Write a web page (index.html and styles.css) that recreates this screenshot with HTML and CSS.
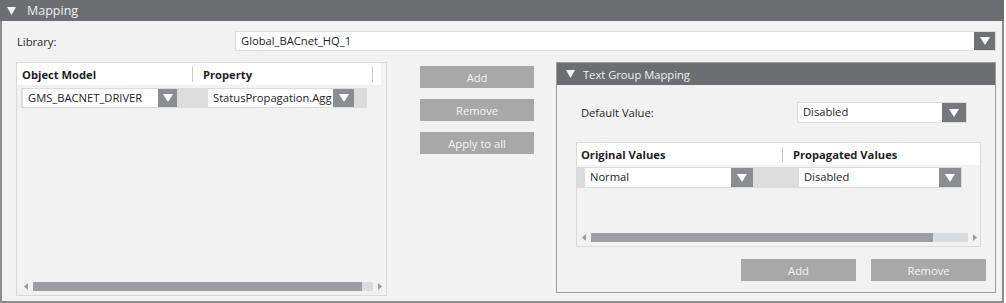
FILE: index.html
```html
<!DOCTYPE html>
<html lang="en">
<head>
    <meta charset="UTF-8">
    <title>Mapping</title>
    <link rel="stylesheet" href="styles.css">
</head>
<body>
    <div class="section">
        <div class="section-head">
            <svg class="caret" width="9" height="8" viewBox="0 0 9 8"><path d="M0 0H9L4.5 8Z" fill="#f2f2f2"/></svg>
            Mapping
        </div>
        <div class="section-body">
            <div class="lib-row">
                <label class="lib-label">Library:</label>
                <div class="combo combo-lib">
                    <span class="combo-text">Global_BACnet_HQ_1</span>
                    <span class="combo-btn"><svg width="10" height="8" viewBox="0 0 10 8"><path d="M0 0H10L5 8Z" fill="#fff"/></svg></span>
                </div>
            </div>

            <div class="main-row">
                <!-- object model / property grid -->
                <div class="grid grid-left">
                    <div class="grid-head">
                        <div class="col col-om">Object Model</div>
                        <div class="col col-prop">Property</div>
                    </div>
                    <div class="grid-row row-left">
                        <div class="combo combo-om">
                            <span class="combo-text">GMS_BACNET_DRIVER</span>
                            <span class="combo-btn light"><svg width="10" height="8" viewBox="0 0 10 8"><path d="M0 0H10L5 8Z" fill="#fff"/></svg></span>
                        </div>
                        <div class="combo combo-prop">
                            <span class="combo-text">StatusPropagation.Agg</span>
                            <span class="combo-btn light"><svg width="10" height="8" viewBox="0 0 10 8"><path d="M0 0H10L5 8Z" fill="#fff"/></svg></span>
                        </div>
                    </div>
                    <div class="grid-fill"></div>
                    <div class="hscroll hscroll-left">
                        <svg class="arrow" width="4" height="7" viewBox="0 0 4 7"><path d="M4 0V7L0 3.5Z" fill="#9a9c9f"/></svg>
                        <div class="track"><div class="thumb" style="width:329px"></div></div>
                        <svg class="arrow" width="4" height="7" viewBox="0 0 4 7"><path d="M0 0V7L4 3.5Z" fill="#9a9c9f"/></svg>
                    </div>
                </div>

                <div class="actions">
                    <button class="btn">Add</button>
                    <button class="btn">Remove</button>
                    <button class="btn">Apply to all</button>
                </div>

                <!-- text group mapping -->
                <div class="subpanel">
                    <div class="sub-head">
                        <svg class="caret" width="9" height="8" viewBox="0 0 9 8"><path d="M0 0H9L4.5 8Z" fill="#f2f2f2"/></svg>
                        Text Group Mapping
                    </div>
                    <div class="sub-body">
                        <div class="default-row">
                            <span class="default-label">Default Value:</span>
                            <div class="combo combo-default">
                                <span class="combo-text">Disabled</span>
                                <span class="combo-btn"><svg width="10" height="8" viewBox="0 0 10 8"><path d="M0 0H10L5 8Z" fill="#fff"/></svg></span>
                            </div>
                        </div>
                        <div class="grid grid-right">
                            <div class="grid-head">
                                <div class="col col-orig">Original Values</div>
                                <div class="col col-propv">Propagated Values</div>
                            </div>
                            <div class="grid-row row-right">
                                <div class="combo combo-orig">
                                    <span class="combo-text">Normal</span>
                                    <span class="combo-btn light"><svg width="10" height="8" viewBox="0 0 10 8"><path d="M0 0H10L5 8Z" fill="#fff"/></svg></span>
                                </div>
                                <div class="combo combo-propv">
                                    <span class="combo-text">Disabled</span>
                                    <span class="combo-btn light"><svg width="10" height="8" viewBox="0 0 10 8"><path d="M0 0H10L5 8Z" fill="#fff"/></svg></span>
                                </div>
                            </div>
                            <div class="grid-fill"></div>
                            <div class="hscroll hscroll-right">
                                <svg class="arrow" width="4" height="7" viewBox="0 0 4 7"><path d="M4 0V7L0 3.5Z" fill="#9a9c9f"/></svg>
                                <div class="track"><div class="thumb" style="width:342px"></div></div>
                                <svg class="arrow" width="4" height="7" viewBox="0 0 4 7"><path d="M0 0V7L4 3.5Z" fill="#9a9c9f"/></svg>
                            </div>
                        </div>
                        <div class="sub-actions">
                            <button class="btn">Add</button>
                            <button class="btn">Remove</button>
                        </div>
                    </div>
                </div>
            </div>
        </div>
    </div>
</body>
</html>
```

FILE: styles.css
```css
* {
    box-sizing: border-box;
    font-family: 'Open Sans', 'Noto Sans', sans-serif;
}

body {
    margin: 0;
    background-color: #ffffff;
    color: #1e1e1e;
    font-size: 11.2px;
}

.section {
    width: 1004px;
}

.section-head {
    height: 21px;
    background-color: #6d6e71;
    color: #f0f0f0;
    font-size: 12.5px;
    display: flex;
    align-items: center;
    padding-left: 7px;
}

.caret {
    margin-right: 11px;
}

.section-body {
    height: 282px;
    background-color: #f2f2f2;
    border: 2px solid #8d8d8d;
    border-top: none;
    padding: 10px 6px 0 14px;
}

.lib-row {
    display: flex;
    align-items: center;
    height: 20px;
}

.lib-label {
    width: 219px;
    padding-left: 1px;
}

/* combo boxes */
.combo {
    display: flex;
    align-items: stretch;
    background-color: #fff;
    border: 1px solid #dcdcdc;
    height: 20px;
    overflow: hidden;
}

.combo-text {
    flex: 1;
    padding-left: 5px;
    white-space: nowrap;
    overflow: hidden;
    line-height: 18px;
}

.combo-btn {
    width: 21px;
    flex: none;
    background-color: #6f7073;
    display: flex;
    align-items: center;
    justify-content: center;
}

.combo-btn.light {
    background-color: #8b8d90;
}

.combo-lib {
    flex: 1;
}

.main-row {
    display: flex;
    align-items: flex-start;
    margin-top: 11px;
}

/* grids */
.grid {
    display: flex;
    flex-direction: column;
    border: 1px solid #dadada;
    background-color: #f2f2f2;
}

.grid-left {
    width: 372px;
    height: 234px;
}

.grid-head {
    display: flex;
    height: 22px;
    background-color: #fff;
    font-weight: 700;
}

.grid-left .grid-head {
    width: 364px;
}

.col {
    display: flex;
    align-items: center;
    position: relative;
}

.col::after {
    content: "";
    position: absolute;
    right: 0;
    top: 4px;
    bottom: 3px;
    border-right: 1px solid #c8c8c8;
}

.col-om {
    width: 176px;
    padding-left: 5px;
}

.col-prop {
    width: 180px;
    padding-left: 10px;
}

.grid-row {
    display: flex;
    height: 20px;
    margin-top: 3px;
    background-color: #dcdcdc;
}

.row-left {
    width: 346px;
    margin-left: 4px;
    padding-left: 1px;
}

.combo-om {
    width: 156px;
}

.combo-om .combo-btn {
    width: 19px;
}

.combo-prop {
    width: 148px;
    margin-left: 29px;
}

.grid-fill {
    flex: 1;
}

.hscroll {
    display: flex;
    align-items: center;
    height: 9px;
}

.hscroll-left {
    margin: 0 0 4px 7px;
}

.track {
    height: 9px;
    background-color: #d9dde0;
    margin: 0 5px;
}

.thumb {
    height: 9px;
    background-color: #9c9ea1;
}

.hscroll-left .track {
    width: 340px;
}

/* middle buttons */
.actions {
    display: flex;
    flex-direction: column;
    gap: 11px;
    width: 114px;
    margin: 4px 0 0 33px;
}

.btn {
    height: 22px;
    border: none;
    background-color: #a8a8a8;
    color: #f4f4f4;
    font-size: 11.2px;
    padding: 0;
}

/* text group mapping panel */
.subpanel {
    width: 441px;
    height: 231px;
    margin-left: 22px;
    border: 1px solid #9d9d9d;
}

.sub-head {
    height: 22px;
    background-color: #6d6e71;
    color: #f0f0f0;
    display: flex;
    align-items: center;
    padding-left: 9px;
}

.sub-head .caret {
    margin-right: 8px;
}

.sub-body {
    padding: 17px 9px 0 19px;
}

.default-row {
    display: flex;
    align-items: center;
    padding-left: 5px;
}

.default-label {
    width: 216px;
}

.combo-default {
    width: 170px;
    height: 21px;
}

.combo-default .combo-btn {
    width: 24px;
    background-color: #76777a;
}

.grid-right {
    width: 405px;
    height: 105px;
    margin-top: 19px;
}

.col-orig {
    width: 206px;
    padding-left: 4px;
}

.col-propv {
    flex: 1;
    padding-left: 10px;
}

.col-propv::after {
    display: none;
}

.row-right {
    width: 385px;
    padding-left: 7px;
    height: 21px;
    margin-top: 2px;
}

.combo-orig {
    width: 170px;
    height: 21px;
}

.combo-orig .combo-btn,
.combo-propv .combo-btn {
    width: 22px;
}

.combo-propv {
    width: 164px;
    height: 21px;
    margin-left: 44px;
}

.hscroll-right {
    margin: 0 0 4px 5px;
}

.hscroll-right .track {
    width: 377px;
}

.sub-actions {
    display: flex;
    justify-content: flex-end;
    gap: 15px;
    margin-top: 12px;
}

.sub-actions .btn {
    width: 115px;
}
```
